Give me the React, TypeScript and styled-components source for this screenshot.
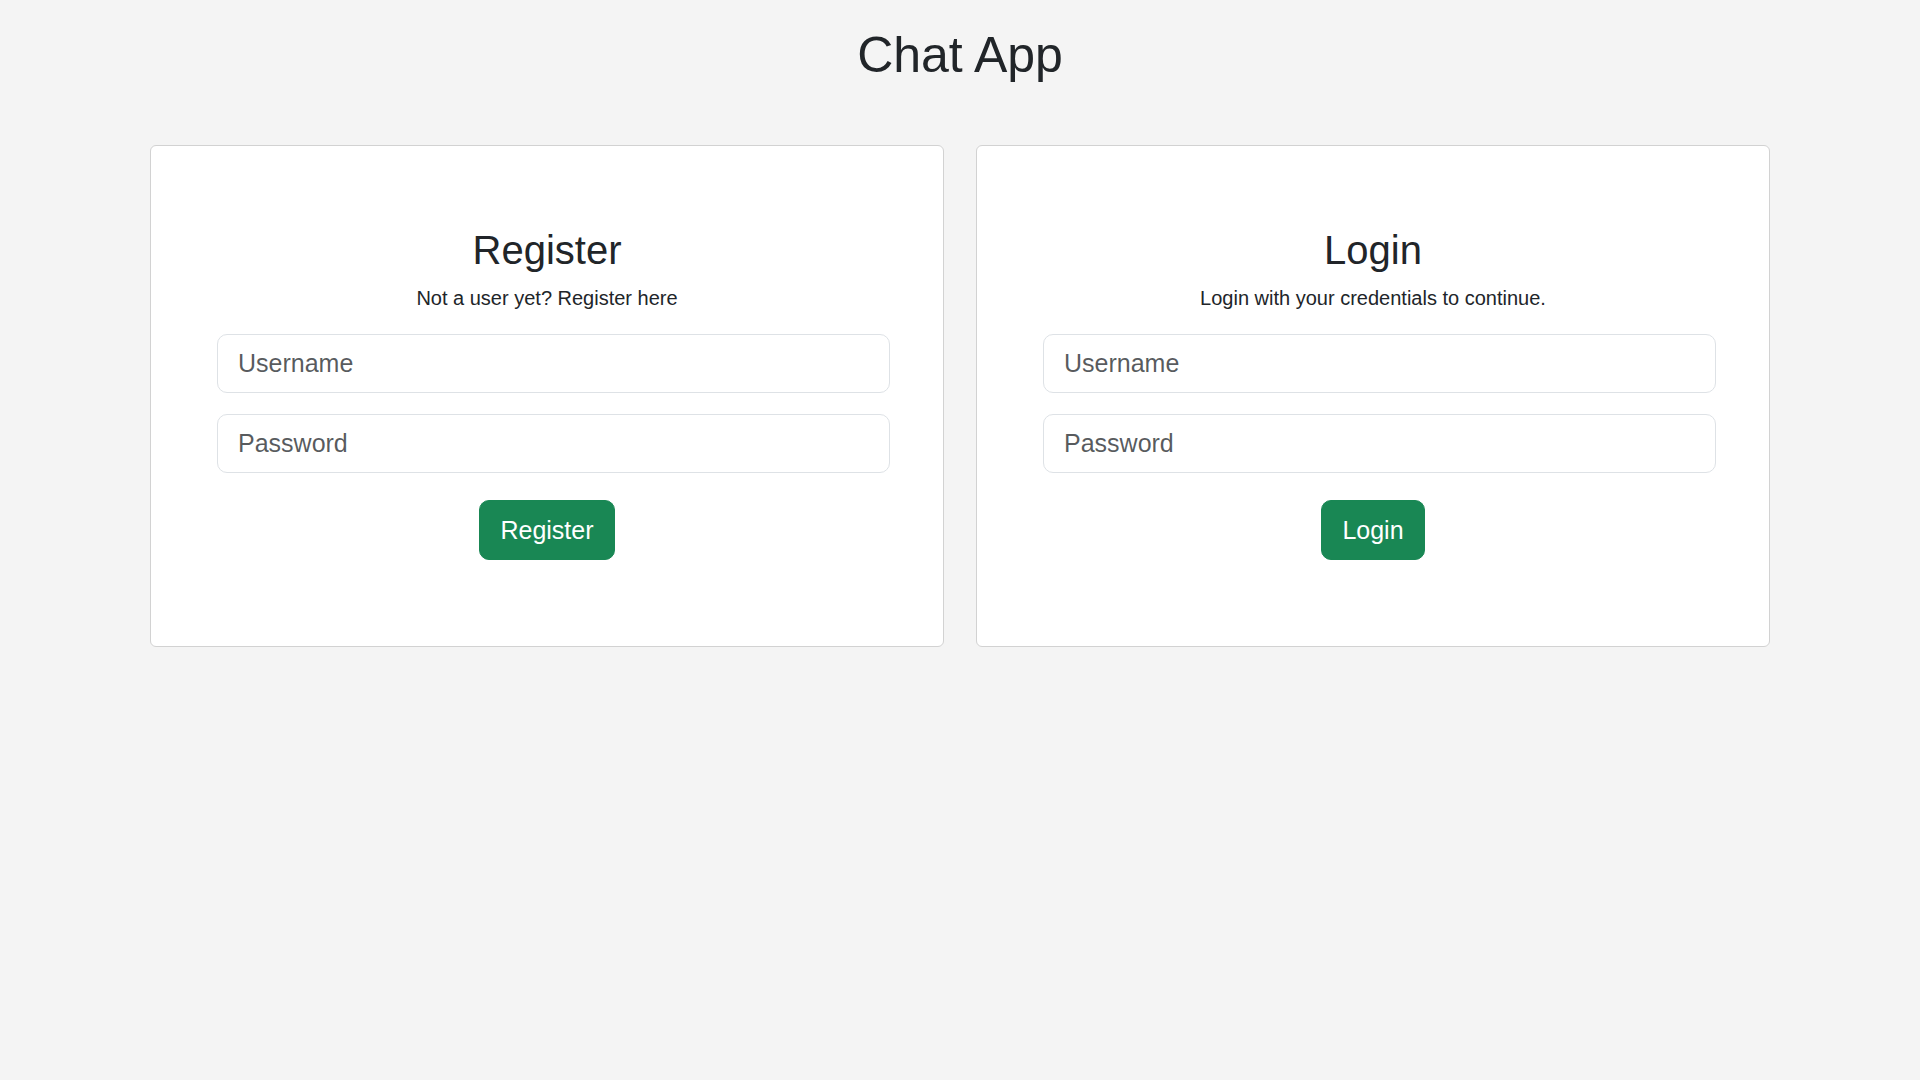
import React from "react";
import styled, { createGlobalStyle } from "styled-components";

const GlobalStyle = createGlobalStyle`
  * { box-sizing: border-box; }
  body {
    margin: 0;
    background: #f4f4f4;
    color: #212529;
    font-family: "Liberation Sans", Arial, Helvetica, sans-serif;
  }
`;

const Page = styled.main`
  padding-top: 25px;
  min-height: 1080px;
`;

const Title = styled.h1`
  margin: 0 0 60px;
  font-size: 50px;
  line-height: 60px;
  font-weight: 400;
  text-align: center;
  color: #212529;
`;

const Grid = styled.div`
  width: 1620px;
  margin: 0 auto;
  display: grid;
  grid-template-columns: 1fr 1fr;
  column-gap: 32px;
`;

const Card = styled.section`
  background: #ffffff;
  border: 1px solid #d2d2d2;
  border-radius: 6px;
  padding: 80px 0 86px;
  display: flex;
  flex-direction: column;
  align-items: center;
`;

const Heading = styled.h2`
  margin: 0 0 9px;
  font-size: 40px;
  line-height: 48px;
  font-weight: 400;
  color: #212529;
`;

const Lead = styled.p`
  margin: 0 0 21px;
  font-size: 20px;
  line-height: 30px;
  color: #212529;
`;

const Form = styled.form`
  align-self: stretch;
  display: flex;
  flex-direction: column;
  align-items: center;
`;

const Fields = styled.div`
  align-self: stretch;
  display: flex;
  flex-direction: column;
  gap: 21px;
  margin: 0 53px 27px 66px;
`;

const Input = styled.input`
  display: block;
  width: 100%;
  height: 59px;
  padding: 0 20px;
  font-family: inherit;
  font-size: 25px;
  color: #212529;
  background: #fff;
  border: 1px solid #dee2e6;
  border-radius: 10px;
  outline: none;
  &::placeholder {
    color: rgba(33, 37, 41, 0.75);
  }
`;

const Button = styled.button`
  height: 60px;
  padding: 0 20px;
  display: inline-flex;
  align-items: center;
  justify-content: center;
  font-family: inherit;
  font-size: 25px;
  color: #ffffff;
  background: #198754;
  border: 1px solid #198754;
  border-radius: 10px;
  cursor: pointer;
`;

type PanelProps = { title: string; lead: string; action: string };

const Panel = ({ title, lead, action }: PanelProps) => (
  <Card>
    <Heading>{title}</Heading>
    <Lead>{lead}</Lead>
    <Form onSubmit={(e) => e.preventDefault()}>
      <Fields>
        <Input type="text" placeholder="Username" />
        <Input type="password" placeholder="Password" />
      </Fields>
      <Button type="submit">{action}</Button>
    </Form>
  </Card>
);

export default function App() {
  return (
    <Page>
      <GlobalStyle />
      <Title>Chat App</Title>
      <Grid>
        <Panel title="Register" lead="Not a user yet? Register here" action="Register" />
        <Panel title="Login" lead="Login with your credentials to continue." action="Login" />
      </Grid>
    </Page>
  );
}
